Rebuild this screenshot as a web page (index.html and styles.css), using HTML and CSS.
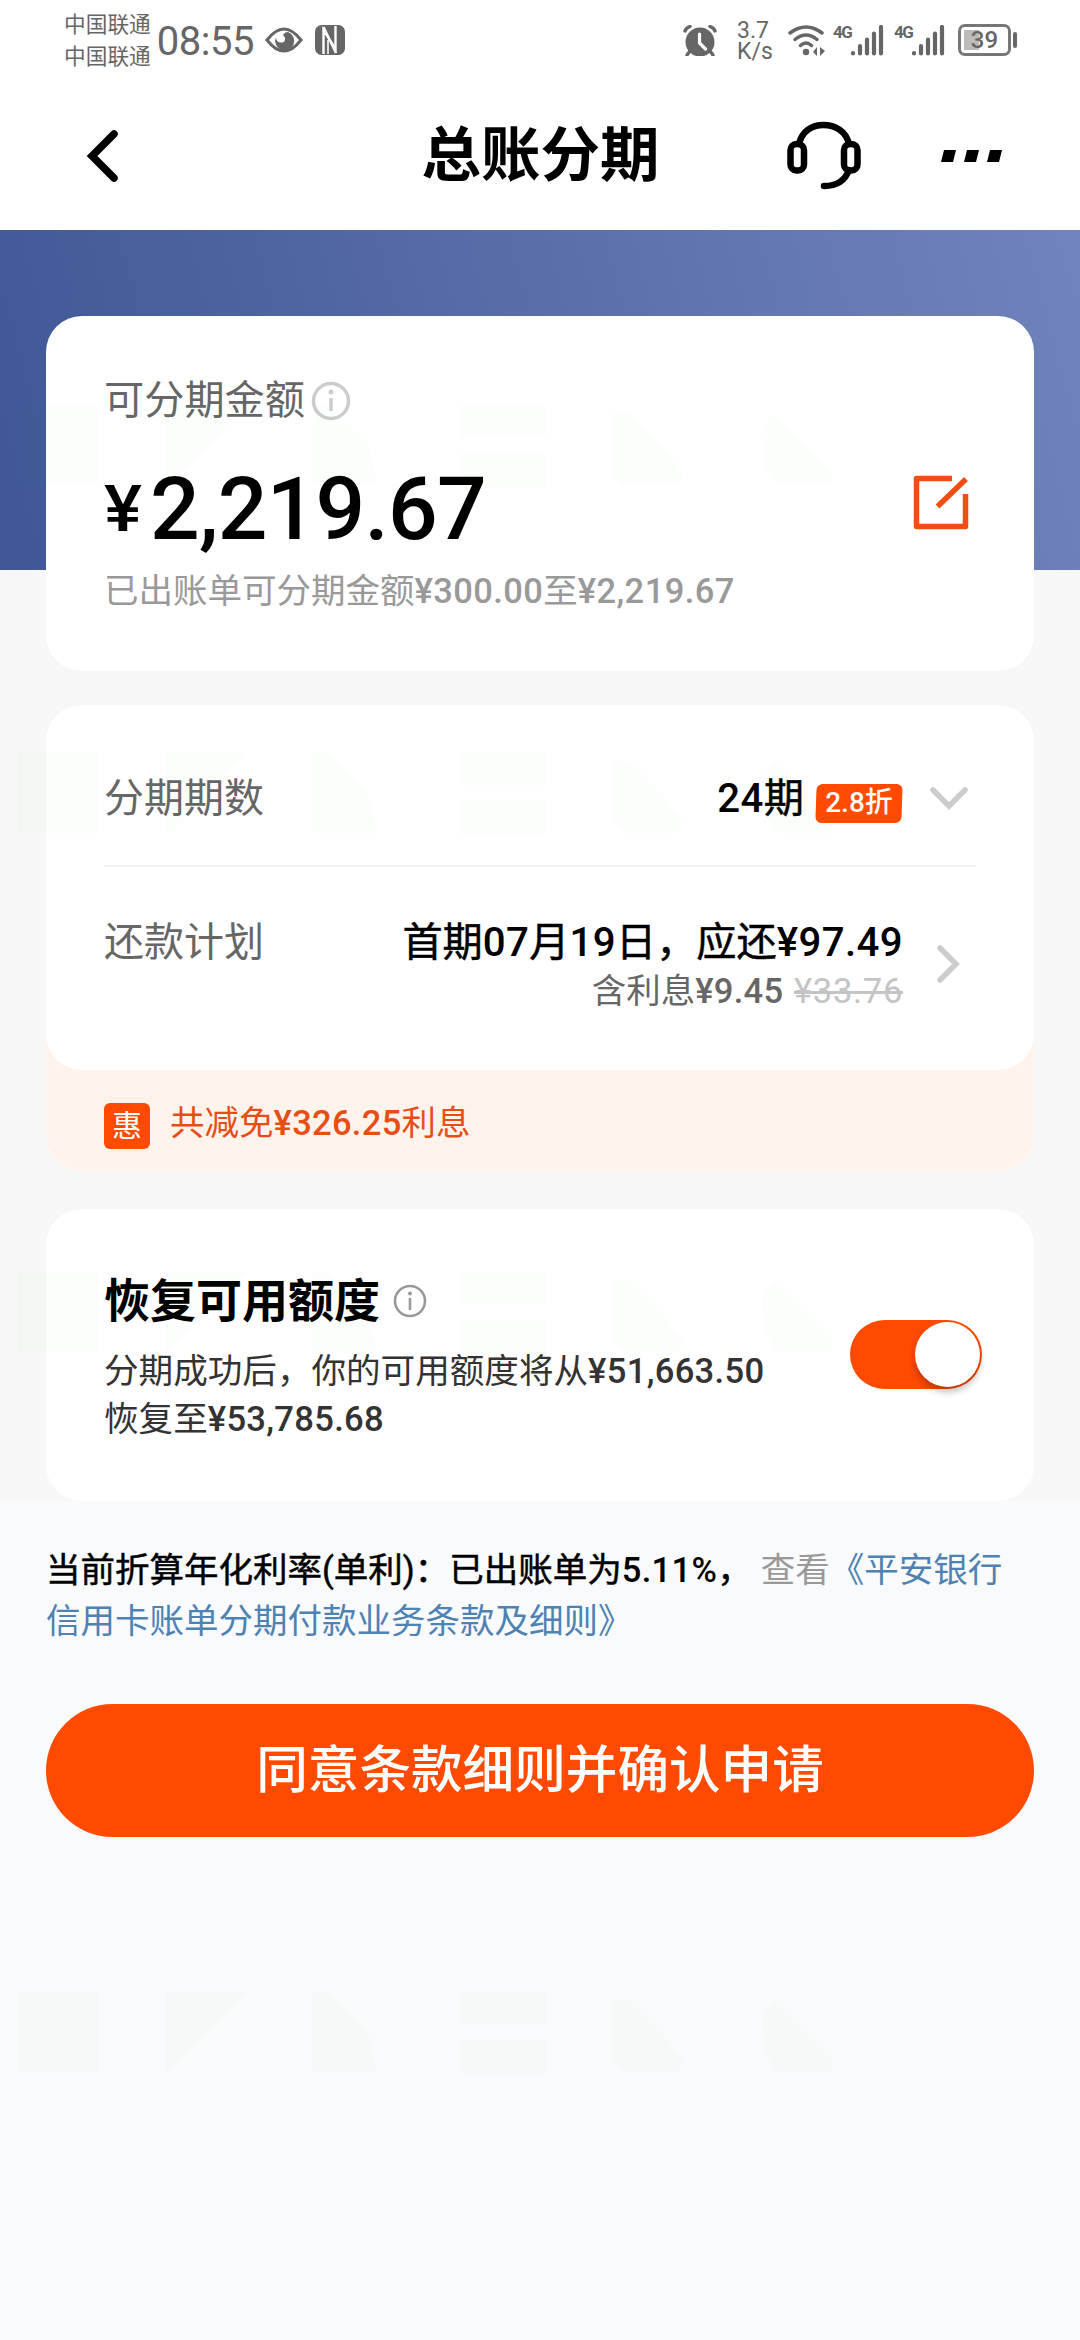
FILE: index.html
```html
<!DOCTYPE html>
<html lang="zh-CN">
<head>
<meta charset="utf-8">
<title>总账分期</title>
<link rel="stylesheet" href="styles.css">
</head>
<body>
<div class="screen">
  <header class="top">
    <div class="status">
      <div class="status-left">
        <div class="carriers"><span>中国联通</span><span>中国联通</span></div>
        <span class="time">08:55</span>
        <svg class="eye" width="38" height="30" viewBox="0 0 38 30"><path d="M2 15Q19-7 36 15Q19 37 2 15Z" fill="none" stroke="currentColor" stroke-width="3"/><path d="M23 7a9.500 9.500 0 1 1-12 5c0 4 3 6 6 5.500 4-.5 4-5 1-7.500 1-2 3-3 5-3Z" fill="currentColor"/></svg>
        <svg class="nfc" width="30" height="30" viewBox="0 0 30 30"><rect width="30" height="30" rx="6.500" fill="currentColor"/><path d="M8.500 29V5l12 19V1M8.500 2l12.500 26" fill="none" stroke="#fff" stroke-width="2.400"/><path d="M13 15v14" stroke="#fff" stroke-width="1.600"/></svg>
      </div>
      <div class="status-right">
        <svg width="34" height="31" viewBox="0 0 34 31"><circle cx="17" cy="17" r="14.500" fill="currentColor"/><path d="M7 26l-3 4M27 26l3 4M2 6Q3 3 7 1.500M32 6Q31 3 27 1.500" fill="none" stroke="currentColor" stroke-width="3.400" stroke-linecap="round"/><path d="M16.500 9v9l6 6" fill="none" stroke="#fff" stroke-width="3.200" stroke-linecap="round"/></svg>
        <div class="speed"><span>3.7</span><span>K/s</span></div>
        <svg class="wifi" width="38" height="31" viewBox="0 0 38 31"><g fill="none" stroke="currentColor" stroke-width="3.500" stroke-linecap="round"><path d="M2 8Q18-4 34 8M7 14.500Q18 5.500 29 14.500M12.500 20.500Q18 15.500 23.500 20.500"/></g><circle cx="18" cy="27" r="3.200" fill="currentColor"/><path d="M29 22v9l-4-4ZM32 22l5 4-5 5Z" fill="currentColor"/></svg>
        <div class="signal"><span>4G</span><svg width="34" height="31" viewBox="0 0 34 31"><path d="M3 28v.5M10 21v7.500M17 14.500v14M24 8.500v20M31 2v26.500" stroke="currentColor" stroke-width="4.200" stroke-linecap="round"/></svg></div>
        <div class="signal second"><span>4G</span><svg width="34" height="31" viewBox="0 0 34 31"><path d="M3 28v.5M10 21v7.500M17 14.500v14M24 8.500v20M31 2v26.500" stroke="currentColor" stroke-width="4.200" stroke-linecap="round"/></svg></div>
        <div class="battery">39</div><i class="nub"></i>
      </div>
    </div>
    <nav class="nav">
      <svg class="back" width="38" height="60" viewBox="0 0 38 60"><path d="M31 8L9 30l22 22" fill="none" stroke="#000" stroke-width="7.500" stroke-linecap="round"/></svg>
      <h1>总账分期</h1>
      <div class="nav-actions">
        <svg width="76" height="70" viewBox="0 0 76 70" fill="none" stroke="#000" stroke-width="6.500" stroke-linecap="round"><path d="M13 23C16 10 26 4 37.500 4S60 10 63 23M63 49C59 60 51 65 38 65"/><rect x="4.500" y="23" width="13.500" height="26.500" rx="6"/><rect x="58" y="23" width="13.500" height="26.500" rx="6"/></svg>
        <svg width="62" height="14" viewBox="0 0 62 14"><path d="M3 1h12l-3 12H0ZM26 1h12l-3 12H23ZM49 1h12l-3 12H46Z"/></svg>
      </div>
    </nav>
  </header>

  <main>
    <section class="hero">
      <div class="card amount-card">
        <div class="amount-label">可分期金额<svg width="40" height="40" viewBox="0 0 40 40"><circle cx="20" cy="20" r="17.500" fill="none" stroke="#ccc" stroke-width="3.500"/><path d="M20 17v13" stroke="#ccc" stroke-width="3.500"/><circle cx="20" cy="11" r="2.500" fill="#ccc"/></svg></div>
        <div class="amount-line">
          <div class="amount"><small>¥</small><span>2,219.67</span></div>
          <svg width="56" height="56" viewBox="0 0 56 56" fill="none" stroke="#f04f14" stroke-width="5.500" stroke-linejoin="round"><path d="M39 3.500H3.500v48h49V19M24.500 31.500L53 4"/></svg>
        </div>
        <p class="amount-note">已出账单可分期金额<b>¥300.00</b>至<b>¥2,219.67</b></p>
      </div>
    </section>

    <section class="plan">
      <div class="card plan-card">
        <div class="row term">
          <span class="label">分期期数</span>
          <span class="value"><b>24</b>期</span><span class="tag"><span>2.8折</span></span>
          <svg class="down" width="40" height="26" viewBox="0 0 40 26"><path d="M4 4l16 16L36 4" fill="none" stroke="#ccc" stroke-width="5.500" stroke-linecap="round"/></svg>
        </div>
        <div class="row repay">
          <span class="label">还款计划</span>
          <div class="repay-info">
            <div class="value">首期<b>07</b>月<b>19</b>日，应还<b>¥97.49</b></div>
            <div class="interest">含利息<b>¥9.45</b> <s>¥33.76</s></div>
          </div>
          <svg class="right" width="26" height="40" viewBox="0 0 26 40"><path d="M4 4l16 16L4 36" fill="none" stroke="#ccc" stroke-width="5.500" stroke-linecap="round"/></svg>
        </div>
      </div>
      <div class="discount"><span class="badge">惠</span><span class="discount-text">共减免<b>¥326.25</b>利息</span></div>
    </section>

    <section class="card restore">
      <div>
        <h2>恢复可用额度<svg width="34" height="34" viewBox="0 0 34 34"><circle cx="17" cy="17" r="15" fill="none" stroke="#999" stroke-width="2.600"/><path d="M17 14v12" stroke="#999" stroke-width="2.600"/><circle cx="17" cy="9.500" r="2" fill="#999"/></svg></h2>
        <p>分期成功后，你的可用额度将从<b>¥51,663.50</b><br>恢复至<b>¥53,785.68</b></p>
      </div>
      <div class="switch"><i></i></div>
    </section>
  </main>

  <footer>
    <p class="terms"><strong>当前折算年化利率(单利)：已出账单为<b>5.11%</b>，</strong><span class="look">查看</span><a>《平安银行</a><br><a>信用卡账单分期付款业务条款及细则》</a></p>
    <button class="submit">同意条款细则并确认申请</button>
  </footer>

  <svg class="watermark" width="1080" height="2340" viewBox="0 0 1080 2340">
    <defs><path id="mark" d="M18 0h80v80H18ZM166 0h81L170 80h-4ZM313 0h14l41 40 9 40h-64ZM461 0h85v32h-85ZM461 48h85v34h-85ZM613 8h16l38 40 15 20-3 12h-55l-11-10ZM762 28l11-20 59 60v12h-55l-12-20Z"/></defs>
    <use href="#mark" y="405"/><use href="#mark" y="753"/><use href="#mark" y="1272"/><use href="#mark" y="1992"/>
  </svg>
</div>
</body>
</html>
```
FILE: styles.css
```css
* { box-sizing: border-box; margin: 0; padding: 0; }
body {
  width: 1080px;
  background: #f9fafc;
  font-family: Roboto, "Noto Sans CJK SC", sans-serif;
  color: #000;
}
svg { display: block; flex: none; }
b { font-weight: 500; letter-spacing: .3px; }
.screen { position: relative; height: 2340px; overflow: hidden; }
.top { height: 230px; background: #fff; }

.status { display: flex; justify-content: space-between; height: 80px; padding: 0 63px 0 64px; color: #666; }
.status-left, .status-right { display: flex; align-items: center; }
.carriers { display: flex; flex-direction: column; font-size: 21.7px; line-height: 32px; padding-top: 2px; }
.time { margin-left: 6px; padding-top: 4px; font-size: 40px; line-height: 48px; width: 96px; white-space: nowrap; letter-spacing: -.5px; }
.eye { margin-left: 12px; }
.nfc { margin-left: 12px; }
.speed { display: flex; flex-direction: column; width: 36px; margin-left: 20px; padding-top: 2px; font-size: 23px; line-height: 21px; }
.wifi { margin-left: 15px; }
.signal { display: flex; align-items: flex-start; margin-left: 7px; }
.signal span { width: 17px; font-size: 17px; line-height: 15px; font-weight: 700; letter-spacing: -1.5px; }
.signal.second { margin-left: 10px; }
.battery {
  width: 53px; height: 32px; margin-left: 13px;
  border: 3px solid #777; border-radius: 7px;
  background: linear-gradient(90deg, #bbb 0 15px, transparent 15px) content-box;
  padding: 3px; font-size: 24px; font-weight: 500; line-height: 21px; text-align: center;
}
.nub { width: 4px; height: 16px; margin-left: 2px; border-radius: 2px; background: #666; }

.nav { display: grid; grid-template-columns: 1fr auto 1fr; align-items: center; height: 150px; padding: 1px 77px 0 83px; }
.nav h1 { font-size: 59.5px; line-height: 80px; font-weight: 700; margin-left: -5px; }
.nav-actions { display: flex; align-items: center; justify-content: flex-end; gap: 79px; }

main { background: #f7f7f7; height: 1271px; }
.card { background: #fff; border-radius: 36px; }
.hero {
  height: 340px; padding: 86px 46px 0;
  background: linear-gradient(75deg, #3f5797, #7183ba);
}
.amount-card { height: 355px; padding: 55px 58px 0; }
.amount-label { display: flex; align-items: center; gap: 6px; height: 60px; font-size: 40.2px; line-height: 60px; color: #666; }
.amount-line { display: flex; justify-content: space-between; align-items: center; height: 110px; padding-right: 7px; margin-top: 17px; }
.amount { display: flex; align-items: baseline; gap: 4px; padding-top: 11px; font-size: 87.5px; line-height: 110px; font-weight: 500; white-space: nowrap; }
.amount span { letter-spacing: -.8px; }
.amount small { width: 42px; font-size: 65px; line-height: 1; transform: translateY(-8px) scaleX(1.1); transform-origin: left; }
.amount-note { margin-top: 8px; font-size: 34.5px; line-height: 50px; color: #999; }
.amount-note b { letter-spacing: .4px; }

.plan { margin: 135px 46px 0; background: #fff3ec; border-radius: 36px; height: 466px; }
.plan-card { height: 365px; padding: 0 58px; }
.row { display: flex; }
.label { flex: 1; font-size: 40px; line-height: 60px; color: #666; }
.value { font-size: 40.2px; line-height: 60px; white-space: nowrap; -webkit-text-stroke: .5px #000; }
.value b { letter-spacing: .4px; -webkit-text-stroke: 0; }
.term { height: 162px; padding-top: 64px; border-bottom: 2px solid #f0f0f0; }
.tag {
  width: 86px; height: 39px; margin: 15px 0 0 12px;
  background: #ff4a00; border-radius: 6px; transform: skewX(-2deg);
  color: #fff; font-size: 28px; line-height: 38px; font-weight: 500; text-align: center;
}
.tag span { display: block; transform: skewX(2deg); }
.down { margin: 17px 7px 0 27px; }
.repay { padding-top: 46px; }
.repay-info { text-align: right; }
.interest { height: 40px; margin-top: -2px; font-size: 34.5px; line-height: 40px; color: #666; white-space: nowrap; word-spacing: 2px; }
.interest s { color: #c4c4c4; letter-spacing: .7px; }
.right { margin: 31px 14px 0 33px; }
.discount { display: flex; align-items: center; gap: 20px; height: 101px; padding: 10px 58px 0; }
.badge { width: 46px; height: 46px; border-radius: 6px; background: #ff4a00; color: #fff; font-size: 30px; line-height: 46px; text-align: center; }
.discount-text { font-size: 34.5px; line-height: 50px; color: #e84e14; padding-bottom: 6px; }

.restore { display: flex; justify-content: space-between; margin: 38px 46px 0; height: 292px; padding: 60px 52px 0 58px; }
.restore h2 { display: flex; align-items: center; gap: 13px; font-size: 46px; line-height: 64px; font-weight: 700; }
.restore p { margin-top: 14px; font-size: 34.6px; line-height: 48px; color: #333; white-space: nowrap; }
.switch { width: 132px; height: 69px; margin-top: 51px; padding: 2px; border-radius: 35px; background: #ff4a00; display: flex; justify-content: flex-end; }
.switch i { width: 65px; height: 65px; border-radius: 50%; background: #fff; box-shadow: 0 5px 7px rgba(0,0,0,.25); }

footer { padding: 44px 46px 0; }
.terms { height: 102px; font-size: 34.5px; line-height: 51px; color: #4d82b2; white-space: nowrap; }
.terms strong { font-weight: 400; color: #000; -webkit-text-stroke: .5px #000; }
.terms b { -webkit-text-stroke: 0; }
.look { color: #999; margin-left: 9px; }
.submit {
  display: block; width: 988px; height: 133px; margin-top: 57px; border: 0; border-radius: 67px;
  background: #ff4a00; color: #fff; font: 500 51.6px/133px Roboto, "Noto Sans CJK SC", sans-serif;
}
.watermark { position: absolute; left: 0; top: 0; fill: #00c020; opacity: .012; pointer-events: none; }
```
